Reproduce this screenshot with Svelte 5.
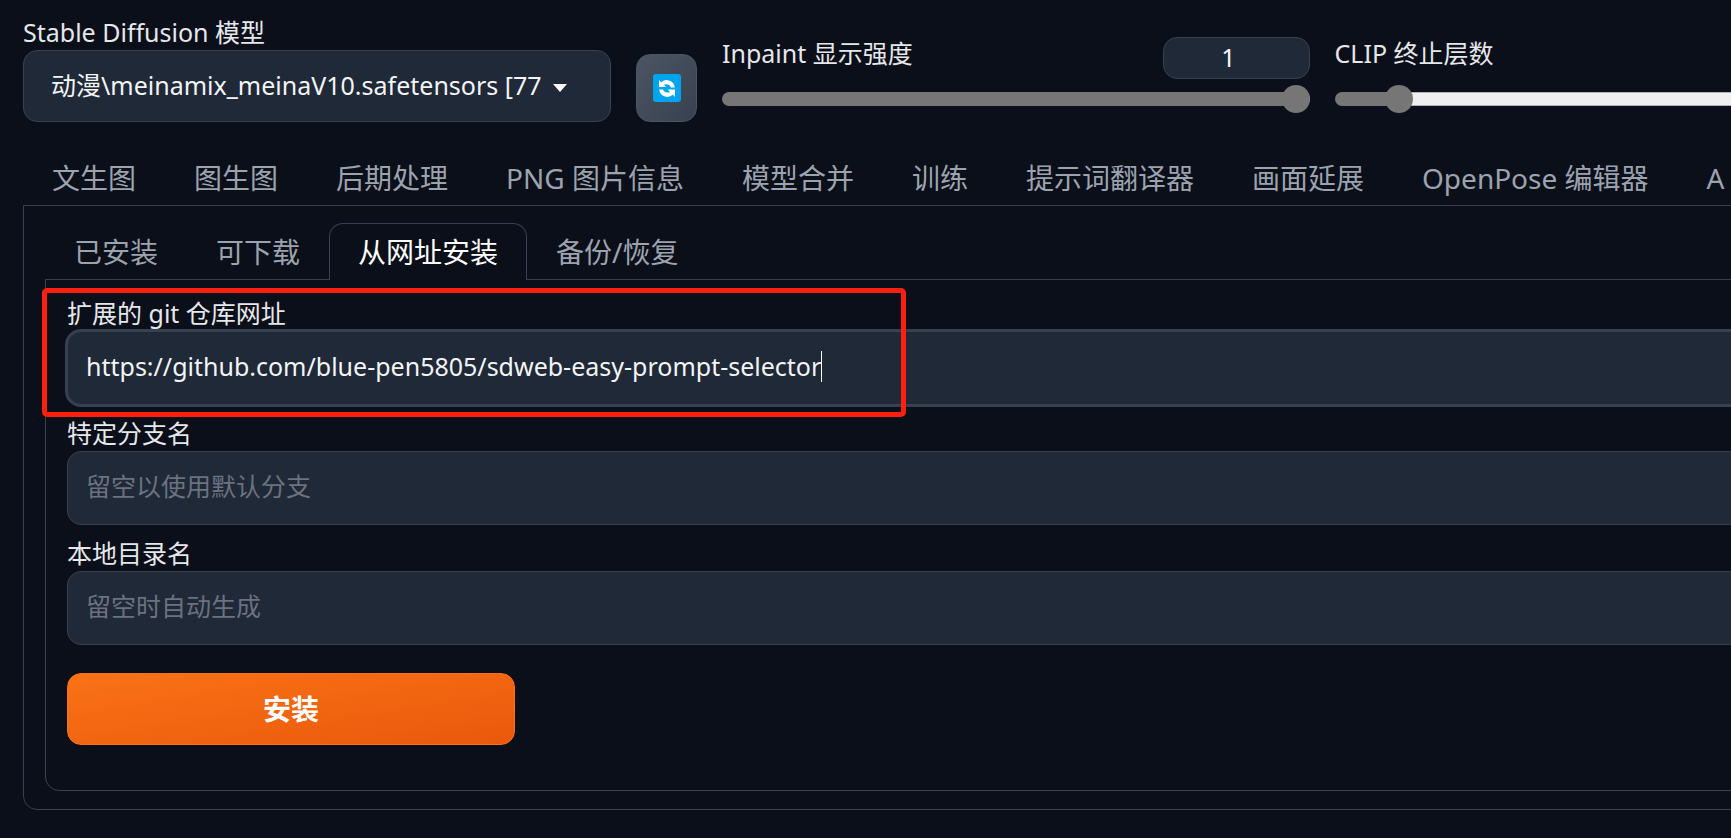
<script>
  const mainTabs = ['文生图', '图生图', '后期处理', 'PNG 图片信息', '模型合并', '训练', '提示词翻译器', '画面延展', 'OpenPose 编辑器', 'A'];
  const subTabs = ['已安装', '可下载', '从网址安装', '备份/恢复'];
  let activeSub = $state('从网址安装');
  let inpaint = $state(1);
  let clip = $state(2);
  let url = $state('https://github.com/blue-pen5805/sdweb-easy-prompt-selector');
  let clipFill = $derived((clip - 1) / 11);
</script>

<div class="viewport">
  <main class="page">
    <section class="controls">
      <div class="model">
        <label for="model">Stable Diffusion 模型</label>
        <div class="select">
          <select id="model">
            <option>动漫\meinamix_meinaV10.safetensors [77</option>
          </select>
          <svg class="arrow" viewBox="0 0 14 8" aria-hidden="true"><path d="M0 0h14L7 8z" fill="#fff" /></svg>
        </div>
      </div>

      <button class="refresh" type="button" aria-label="刷新">
        <svg viewBox="0 0 28 28" aria-hidden="true">
          <rect width="28" height="28" rx="3" fill="#00a4ef" />
          <path d="M6 6L8.200 8.200A8.200 8.200 0 0 1 21.800 13.500H18A5 5 0 0 0 11 10.800L13.200 13H6Z" fill="#fff" />
          <path d="M22 23L19.800 20.800A8.200 8.200 0 0 1 6.200 15.500H10A5 5 0 0 0 17 18L14.600 15.600H22Z" fill="#fff" />
        </svg>
      </button>

      <div class="slider">
        <div class="head">
          <label for="inpaint">Inpaint 显示强度</label>
          <input class="number" type="number" min="0" max="1" step="0.1" bind:value={inpaint} aria-label="Inpaint 显示强度" />
        </div>
        <input id="inpaint" type="range" min="0" max="1" step="0.1" bind:value={inpaint} style="--fill: {inpaint}" />
      </div>

      <div class="slider">
        <div class="head">
          <label for="clip">CLIP 终止层数</label>
          <input class="number" type="number" min="1" max="12" bind:value={clip} aria-label="CLIP 终止层数" />
        </div>
        <input id="clip" type="range" min="1" max="12" bind:value={clip} style="--fill: {clipFill}" />
      </div>
    </section>

    <nav class="tabs">
      {#each mainTabs as tab}
        <button type="button">{tab}</button>
      {/each}
    </nav>

    <section class="panel outer">
      <nav class="tabs">
        {#each subTabs as tab}
          <button type="button" class:active={tab === activeSub} onclick={() => (activeSub = tab)}>{tab}</button>
        {/each}
      </nav>

      <form class="panel inner" onsubmit={(e) => e.preventDefault()}>
        <div class="field marked">
          <label for="repo">扩展的 git 仓库网址</label>
          <div class="box focused">
            <input id="repo" class="fit" type="text" bind:value={url} />
            <span class="caret"></span>
          </div>
        </div>
        <div class="field">
          <label for="branch">特定分支名</label>
          <div class="box"><input id="branch" type="text" placeholder="留空以使用默认分支" /></div>
        </div>
        <div class="field">
          <label for="dir">本地目录名</label>
          <div class="box"><input id="dir" type="text" placeholder="留空时自动生成" /></div>
        </div>
        <button class="install" type="submit">安装</button>
      </form>
    </section>
  </main>
</div>

<style>
  :global(body) {
    background: #0b0f19;
  }

  .viewport {
    overflow: hidden;
    color: #f3f4f6;
    font-family: 'Noto Sans', 'Noto Sans CJK SC', sans-serif;
    font-size: 25px;
  }

  .page {
    box-sizing: border-box;
    width: calc(100% + 214px);
    padding: 16px 23px 24px;
  }

  .page :is(input, select, button) {
    box-sizing: border-box;
    font-family: inherit;
    color: inherit;
  }

  label {
    display: block;
    height: 34px;
    line-height: 32px;
    color: #e5e7eb;
    white-space: nowrap;
  }

  .controls {
    display: flex;
    align-items: flex-end;
    gap: 25px;
    margin-bottom: 27px;
  }

  .model {
    flex: 0 0 588px;
  }

  .select {
    position: relative;
  }

  select {
    appearance: none;
    display: block;
    width: 100%;
    height: 72px;
    padding: 0 64px 2px 27px;
    border: 1px solid #374151;
    border-radius: 14px;
    background: #1f2937;
    font-size: 25px;
  }

  .arrow {
    position: absolute;
    top: 34px;
    right: 44px;
    width: 14px;
    height: 8px;
    pointer-events: none;
  }

  .refresh {
    display: grid;
    place-items: center;
    flex: 0 0 61px;
    height: 68px;
    padding: 0;
    border: 1px solid #4b5563;
    border-radius: 14px;
    background: linear-gradient(to bottom right, #4b5563, #374151);
  }

  .refresh svg {
    width: 28px;
    height: 28px;
  }

  .slider {
    flex: 1 1 0;
    padding-bottom: 9px;
  }

  .head {
    display: flex;
    justify-content: space-between;
    align-items: flex-start;
    margin-bottom: 6px;
  }

  .number {
    width: 147px;
    height: 42px;
    padding: 0 0 2px;
    border: 1px solid #374151;
    border-radius: 14px;
    background: #1f2937;
    font-size: 25px;
    text-align: center;
  }

  input[type='range'] {
    --stop: calc(14px + (100% - 28px) * var(--fill));
    appearance: none;
    display: block;
    width: 100%;
    height: 28px;
    margin: 0;
    background: none;
  }

  input[type='range']::-webkit-slider-runnable-track {
    box-sizing: border-box;
    height: 14px;
    border-radius: 7px;
    background:
      linear-gradient(to right, #767676 var(--stop), transparent var(--stop)),
      linear-gradient(#b2b2b2 1px, #efefef 1px, #efefef 13px, #b2b2b2 13px);
  }

  input[type='range']::-webkit-slider-thumb {
    appearance: none;
    width: 28px;
    height: 28px;
    margin-top: -7px;
    border-radius: 50%;
    background: #767676;
  }

  .tabs {
    display: flex;
    position: relative;
    z-index: 1;
    margin-bottom: -1px;
  }

  .page .tabs button {
    flex: none;
    height: 57px;
    padding: 0 28px;
    border: 1px solid transparent;
    border-bottom: 0;
    border-radius: 14px 14px 0 0;
    background: none;
    color: #9ca3af;
    font-size: 28px;
    line-height: 40px;
    white-space: nowrap;
  }

  .page .tabs button.active {
    border-color: #374151;
    background: #0b0f19;
    color: #fff;
  }

  .panel {
    border: 1px solid #374151;
    border-radius: 0 0 14px 14px;
  }

  .outer {
    padding: 17px 21px 18px;
  }

  .inner {
    display: flex;
    flex-direction: column;
    gap: 12px;
    padding: 17px 21px 45px;
  }

  .marked {
    position: relative;
  }

  .marked::after {
    content: '';
    position: absolute;
    top: -9px;
    left: -25px;
    box-sizing: border-box;
    width: 864px;
    height: 129px;
    border: 5px solid #ff1f10;
    border-radius: 5px;
    pointer-events: none;
  }

  .box {
    display: flex;
    align-items: center;
    box-sizing: border-box;
    height: 74px;
    padding: 0 18px 4px;
    border: 1px solid #374151;
    border-radius: 14px;
    background: #1f2937;
  }

  .box.focused {
    box-shadow: 0 0 0 2px #374151;
  }

  .box input {
    flex: 1;
    min-width: 0;
    height: 40px;
    padding: 0;
    border: 0;
    outline: 0;
    background: none;
    font-size: 25px;
  }

  .box input.fit {
    flex: none;
    field-sizing: content;
  }

  .box input::placeholder {
    color: #6b7280;
    opacity: 1;
  }

  .caret {
    width: 1px;
    height: 31px;
    background: #fff;
  }

  .page .install {
    align-self: flex-start;
    width: 448px;
    height: 72px;
    margin-top: 16px;
    padding: 0 0 2px;
    border: 1px solid #f97316;
    border-radius: 14px;
    background: linear-gradient(to bottom right, #f97316, #ea580c);
    color: #fff;
    font-size: 28px;
    font-weight: 700;
  }
</style>
